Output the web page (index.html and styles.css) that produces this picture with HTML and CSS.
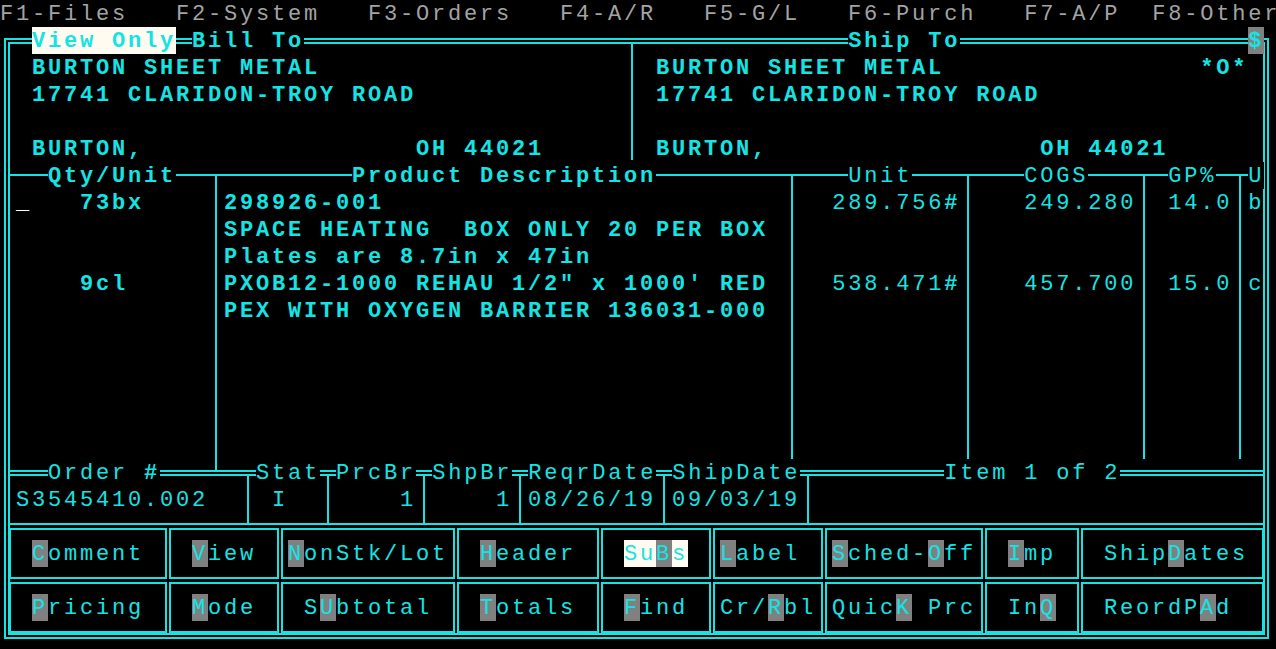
FILE: index.html
```html
<!DOCTYPE html>
<html lang="en">

<head>
    <meta charset="UTF-8">
    <meta name="viewport" content="width=device-width, initial-scale=1.0">
    <title>Order Entry - View Only</title>
    <link rel="stylesheet" href="styles.css">
</head>

<body>
    <div class="screen">
        <!-- frame and table lines -->
        <div class="frame"></div>
        <div class="split"></div>
        <div class="rule"></div>
        <div class="col col-qty"></div>
        <div class="col col-desc"></div>
        <div class="col col-unit"></div>
        <div class="col col-cogs"></div>
        <div class="col col-gp"></div>
        <div class="dbl"></div>
        <div class="sep sep-stat"></div>
        <div class="sep sep-prc"></div>
        <div class="sep sep-shp"></div>
        <div class="sep sep-reqr"></div>
        <div class="sep sep-date"></div>
        <div class="sep sep-end"></div>
        <div class="base"></div>

        <!-- screen text, one line per row -->
        <div class="text">
            <p class="menu">F1-Files   F2-System   F3-Orders   F4-A/R   F5-G/L   F6-Purch   F7-A/P  F8-Other</p>
            <p class="bold">  <span class="sel">View Only</span> <span class="lab">Bill To</span>                                  <span class="lab">Ship To</span>                  <span class="hk">$</span></p>
            <p class="bold">  BURTON SHEET METAL                     BURTON SHEET METAL                *O*</p>
            <p class="bold">  17741 CLARIDON-TROY ROAD               17741 CLARIDON-TROY ROAD</p>
            <p></p>
            <p class="bold">  BURTON,                 OH 44021       BURTON,                 OH 44021</p>
            <p>   <span class="lab"><b>Qty/Unit</b></span>           <span class="lab"><b>Product Description</b></span>            <span class="lab">Unit</span>       <span class="lab">COGS</span>     <span class="lab">GP%</span>  <span class="lab">U</span></p>
            <p> <span class="cur">_</span>   <b>73bx</b>     <b>298926-001</b>                            289.756<b>#</b>    249.280  14.0 b</p>
            <p class="bold">              SPACE HEATING  BOX ONLY 20 PER BOX</p>
            <p class="bold">              Plates are 8.7in x 47in</p>
            <p>     <b>9cl</b>      <b>PXOB12-1000 REHAU 1/2" x 1000' RED</b>    538.471<b>#</b>    457.700  15.0 c</p>
            <p class="bold">              PEX WITH OXYGEN BARRIER 136031-000</p>
            <p></p>
            <p></p>
            <p></p>
            <p></p>
            <p></p>
            <p>   <span class="lab">Order <b>#</b></span>      <span class="lab">Stat</span> <span class="lab">PrcBr</span> <span class="lab">ShpBr</span> <span class="lab">ReqrDate</span> <span class="lab">ShipDate</span>         <span class="lab">Item 1 of 2</span></p>
            <p> S3545410.002    I       1     1 08/26/19 09/03/19</p>
        </div>

        <!-- function keys -->
        <div class="keys">
            <div class="key"><span class="hk">C</span>omment</div>
            <div class="key"><span class="hk">V</span>iew</div>
            <div class="key tight"><span class="hk">N</span>onStk/Lot</div>
            <div class="key"><span class="hk">H</span>eader</div>
            <div class="key"><span class="sel">Su</span><span class="hk">B</span><span class="sel">s</span></div>
            <div class="key tight"><span class="hk">L</span>abel</div>
            <div class="key tight"><span class="hk">S</span>ched-<span class="hk">O</span>ff</div>
            <div class="key"><span class="hk">I</span>mp</div>
            <div class="key">Ship<span class="hk">D</span>ates</div>

            <div class="key"><span class="hk">P</span>ricing</div>
            <div class="key"><span class="hk">M</span>ode</div>
            <div class="key">S<span class="hk">U</span>btotal</div>
            <div class="key"><span class="hk">T</span>otals</div>
            <div class="key"><span class="hk">F</span>ind</div>
            <div class="key tight">Cr/<span class="hk">R</span>bl</div>
            <div class="key tight">Quic<span class="hk">K</span> Prc</div>
            <div class="key">In<span class="hk">Q</span></div>
            <div class="key">ReordP<span class="hk">A</span>d</div>
        </div>
    </div>
</body>

</html>
```

FILE: styles.css
```css
* {
    margin: 0;
    padding: 0;
    box-sizing: border-box;
}

html,
body {
    background-color: #000;
    overflow: hidden;
}

/* 80 x 24 character cells, 16 x 27 px each */
.screen {
    display: grid;
    grid-template-columns: repeat(80, 16px);
    grid-template-rows: repeat(24, 27px);
    width: 1280px;
    font-family: "Liberation Mono", "DejaVu Sans Mono", monospace;
    font-size: 22px;
    letter-spacing: 2.8px;
    color: #14e4e4;
}

.frame {
    grid-row: 2 / 25;
    grid-column: 1 / 81;
    margin: 11px 11px 9px 4px;
    border: 6px double #14e4e4;
}

.split {
    grid-row: 2 / 7;
    grid-column: 40;
    width: 2px;
    margin: 17px 0 2px 7px;
    background-color: #14e4e4;
}

.rule {
    grid-row: 7;
    grid-column: 1 / 81;
    height: 2px;
    margin: 12px 17px 0 10px;
    background-color: #14e4e4;
}

.col {
    grid-row: 7 / 18;
    width: 2px;
    margin: 13px 0 0 7px;
    background-color: #14e4e4;
}

.col-qty {
    grid-column: 14;
    grid-row: 7 / 19;
    margin-bottom: 14px;
}

.col-desc {
    grid-column: 50;
}

.col-unit {
    grid-column: 61;
}

.col-cogs {
    grid-column: 72;
}

.col-gp {
    grid-column: 78;
}

.dbl {
    grid-row: 18;
    grid-column: 1 / 81;
    height: 6px;
    margin: 11px 17px 0 10px;
    border-top: 2px solid #14e4e4;
    border-bottom: 2px solid #14e4e4;
}

.sep {
    grid-row: 18 / 21;
    width: 2px;
    margin: 17px 0 17px 7px;
    background-color: #14e4e4;
}

.sep-stat {
    grid-column: 16;
}

.sep-prc {
    grid-column: 21;
}

.sep-shp {
    grid-column: 27;
}

.sep-reqr {
    grid-column: 33;
}

.sep-date {
    grid-column: 42;
}

.sep-end {
    grid-column: 51;
}

.base {
    grid-row: 20;
    grid-column: 1 / 81;
    height: 2px;
    margin: 10px 17px 0 10px;
    background-color: #14e4e4;
}

.text {
    grid-row: 1 / 25;
    grid-column: 1 / 81;
}

.text p {
    height: 27px;
    line-height: 30px;
    white-space: pre;
}

.menu {
    color: #a3a3a3;
}

.bold {
    font-weight: bold;
}

.sel,
.hk,
.lab {
    display: inline-block;
    height: 27px;
    vertical-align: top;
}

.sel {
    background-color: #fffbf0;
}

.hk {
    background-color: #808080;
}

.lab {
    background-color: #000;
}

.cur {
    color: #fff;
    font-weight: bold;
}

.keys {
    grid-row: 20 / 25;
    grid-column: 1 / 81;
    display: grid;
    grid-template-columns: 160px 112px 176px 144px 112px 112px 160px 96px 185px;
    grid-template-rows: 54px 54px;
    align-content: start;
    margin: 13px 0 0 8px;
}

.key {
    margin: 2px 1px 1px 1px;
    padding: 10px 0 0 21px;
    border: 2px solid #14e4e4;
    line-height: 30px;
    white-space: pre;
}

.key.tight {
    padding-left: 5px;
}
```
